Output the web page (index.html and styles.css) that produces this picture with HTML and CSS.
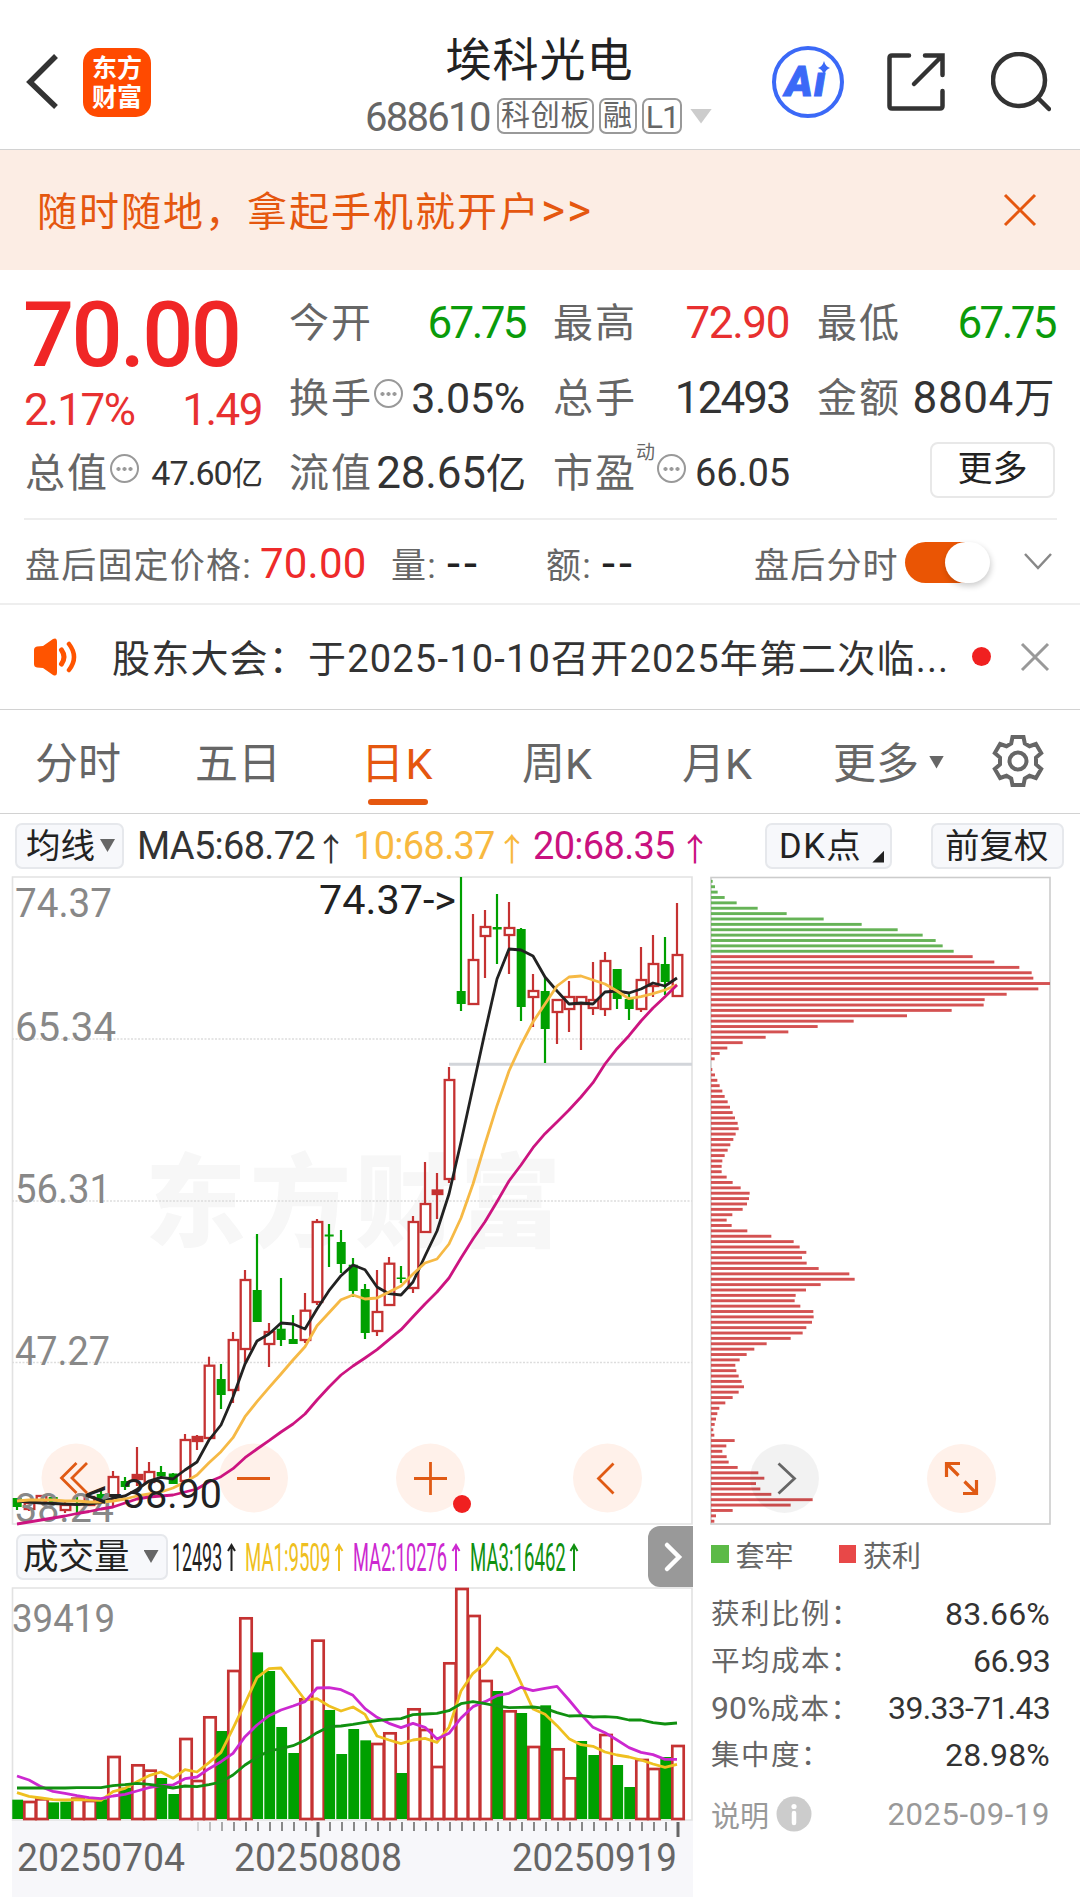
FILE: index.html
```html
<!DOCTYPE html>
<html lang="zh-CN">
<head>
<meta charset="utf-8">
<title>埃科光电 688610</title>
<link rel="stylesheet" href="styles.css">
</head>
<body>
<header class="header">
  <div class="header-left">
    <svg class="back" width="34" height="60" viewBox="0 0 34 60"><path d="M31 5 5 31l26 25"/></svg>
    <div class="logo"><span>东方</span><span>财富</span></div>
  </div>
  <div class="header-title">
    <h1>埃科光电</h1>
    <div class="code-row"><span class="code">688610</span><span class="tag">科创板</span><span class="tag">融</span><span class="tag">L1</span><i class="tri tri-code"></i></div>
  </div>
  <div class="header-right">
    <svg width="74" height="74" viewBox="0 0 74 74">
      <circle cx="37" cy="37" r="34" fill="none" stroke="#3b69f7" stroke-width="4"/>
      <text class="ai" x="14" y="51">A</text>
      <text class="ai" x="43" y="51">ı</text>
      <path d="M53 16q1.500 5.500 6 7-4.500 1.500-6 7-1.500-5.500-6-7 4.500-1.500 6-7z" fill="#3b69f7"/>
    </svg>
    <svg class="line-icon" width="60" height="60" viewBox="0 0 60 60"><path d="M23 3.500H6Q3.500 3.500 3.500 6v48q0 2.500 2.500 2.500h48q2.500 0 2.500-2.500V39M39 3.500h17.500V23M56 4 28 32"/></svg>
    <svg class="line-icon" width="60" height="60" viewBox="0 0 60 60"><circle cx="28" cy="28" r="26"/><path d="M47 46l11 11"/></svg>
  </div>
</header>

<section class="banner">
  <p>随时随地，拿起手机就开户<span>&gt;&gt;</span></p>
  <svg width="34" height="34" viewBox="0 0 34 34"><path d="M2 2l30 30M32 2 2 32"/></svg>
</section>

<section class="quote">
  <div class="price-cell">
    <div class="price">70.00</div>
    <div class="change"><span>2.17%</span><span>1.49</span></div>
  </div>
  <div class="cell"><span>今开</span><b class="green">67.75</b></div>
  <div class="cell"><span>最高</span><b class="red">72.90</b></div>
  <div class="cell"><span>最低</span><b class="green">67.75</b></div>
  <div class="cell"><span>换手</span><i class="dots"></i><b class="n42">3.05%</b></div>
  <div class="cell"><span>总手</span><b class="n45">12493</b></div>
  <div class="cell"><span>金额</span><b class="wan">8804<em>万</em></b></div>
  <div class="cell"><span>总值</span><i class="dots"></i><b class="n34">47.60<em>亿</em></b></div>
  <div class="cell"><span>流值</span><b class="n44">28.65<em>亿</em></b></div>
  <div class="cell"><span>市盈</span><sup>动</sup><i class="dots pe"></i><b class="n38">66.05</b></div>
  <div class="cell end"><button class="more">更多</button></div>
</section>

<section class="after">
  <span class="a-label">盘后固定价格:</span><b class="a-price">70.00</b>
  <span class="a-vol">量:</span><b class="dash">--</b>
  <span class="a-amt">额:</span><b class="dash">--</b>
  <span class="a-time">盘后分时</span>
  <span class="toggle"><i></i></span>
  <svg width="30" height="20" viewBox="0 0 30 20"><path d="M2 2l13 14L28 2"/></svg>
</section>

<section class="news">
  <svg width="46" height="38" viewBox="0 0 46 38"><path d="M1 12q0-3 3-3.500l6-.5L20 1q4-2 4 3v30q0 5-4 3l-10-7-6-.5q-3-.5-3-3.500z" fill="#ff5400"/><path d="M28.500 12q5 7 0 14" fill="none" stroke="#ff5400" stroke-width="5" stroke-linecap="round"/><path d="M36 6q10 13 0 26" fill="none" stroke="#ff5400" stroke-width="4.500" stroke-linecap="round"/></svg>
  <p>股东大会：于2025-10-10召开2025年第二次临...</p>
  <i class="dot"></i>
  <svg class="close" width="30" height="30" viewBox="0 0 30 30"><path d="M2 2l26 26M28 2 2 28"/></svg>
</section>

<nav class="tabs">
  <a>分时</a><a>五日</a><a class="active">日K</a><a>周K</a><a>月K</a><a class="tab-more">更多<i class="tri"></i></a>
  <svg width="54" height="54" viewBox="0 0 54 54"><path d="M21.500 3h11l1.300 6.500 4.700 2.700 6.400-2.200 5.300 9-5.200 4.600v6.800l5.200 4.600-5.300 9-6.400-2.200-4.700 2.700L32.500 51h-11l-1.300-6.500-4.700-2.700L9.100 44l-5.300-9L9 30.400v-6.800L3.800 19l5.300-9 6.400 2.200 4.700-2.700z"/><circle cx="27" cy="27" r="8.500"/></svg>
</nav>

<div class="tools">
  <button class="chip ma">均线<i class="tri"></i></button>
  <span class="m5">MA5:68.72<i>↑</i></span><span class="m10">10:68.37<i>↑</i></span><span class="m20">20:68.35<i>↑</i></span>
  <button class="chip dk">DK点<i class="corner"></i></button>
  <button class="chip adj">前复权</button>
</div>

<main class="charts">
  <div class="left">
    <svg id="kline" width="693" height="650" viewBox="0 876 693 650"></svg>
    <div class="vol-bar">
      <button class="chip vol">成交量<i class="tri"></i></button>
      <svg width="480" height="61" viewBox="168 1526 480 61" class="legend">
        <g fill="#222"><text transform="translate(172 1571) scale(.470 1)">12493</text><path d="M231.500 1571v-25M228 1551l3.500-6 3.500 6" stroke="#222"/></g>
        <g fill="#efbf20"><text transform="translate(245 1571) scale(.490 1)">MA1:9509</text><path d="M339 1571v-25M335.500 1551l3.500-6 3.500 6" stroke="#efbf20"/></g>
        <g fill="#cc28d0"><text transform="translate(353 1571) scale(.480 1)">MA2:10276</text><path d="M456 1571v-25M452.500 1551l3.500-6 3.500 6" stroke="#cc28d0"/></g>
        <g fill="#109010"><text transform="translate(470 1571) scale(.490 1)">MA3:16462</text><path d="M574 1571v-25M570.500 1551l3.500-6 3.500 6" stroke="#109010"/></g>
      </svg>
      <button class="next"><svg width="20" height="32" viewBox="0 0 20 32"><path d="M4 4l12 12L4 28"/></svg></button>
    </div>
    <svg id="volume" width="693" height="310" viewBox="0 1587 693 310"></svg>
  </div>
  <aside class="right">
    <svg id="costs" width="387" height="650" viewBox="693 876 387 650"></svg>
    <div class="keys"><i class="key-g"></i><span>套牢</span><i class="key-r"></i><span>获利</span></div>
    <dl class="stats">
      <div><dt>获利比例：</dt><dd class="pct">83.66%</dd></div>
      <div><dt>平均成本：</dt><dd>66.93</dd></div>
      <div><dt><u>90%</u>成本：</dt><dd>39.33-71.43</dd></div>
      <div><dt>集中度：</dt><dd class="pct">28.98%</dd></div>
    </dl>
    <div class="note"><span>说明</span><svg width="36" height="36" viewBox="0 0 36 36"><circle cx="18" cy="18" r="17.500" fill="#ccc"/><circle cx="18" cy="10.500" r="2.600" fill="#fff"/><path d="M18 17v10" stroke="#fff" stroke-width="4.500" stroke-linecap="round"/></svg><time>2025-09-19</time></div>
  </aside>
</main>
<script src="charts.js"></script>
</body>
</html>
```
FILE: styles.css
```css
* { box-sizing: border-box; margin: 0; padding: 0; }
body { width: 1080px; height: 1897px; overflow: hidden; background: #fff; color: #333; font-family: Roboto, "Noto Sans CJK SC", sans-serif; }
svg { display: block; flex: none; }
i, em { font-style: normal; }
u { text-decoration: none; }
b { font-weight: 400; }
button { font: inherit; color: #222; background: none; border: 0; }
.tri { display: inline-block; width: 15px; height: 13px; background: #666; clip-path: polygon(0 0, 100% 0, 50% 100%); }

.header { display: grid; grid-template-columns: 366px 347px 367px; height: 150px; border-bottom: 1px solid #d2d2d2; }
.header-left { display: flex; align-items: flex-start; padding: 48px 0 0 25px; }
.back { margin-top: 3px; fill: none; stroke: #333; stroke-width: 5.500; }
.logo { display: flex; flex-direction: column; align-items: center; justify-content: center; width: 68px; height: 69px; margin-left: 24px; border-radius: 15px; background: #ff4a00; color: #fff; font-weight: 700; font-size: 25px; line-height: 29px; }
.header-title { padding-top: 32px; }
.header-title h1 { font-size: 46px; line-height: 56px; font-weight: 400; color: #222; text-align: center; letter-spacing: 1px; }
.code-row { display: flex; align-items: center; height: 36px; margin-top: 10px; color: #666; white-space: nowrap; }
.code { width: 132px; margin-left: -1px; font-size: 40px; letter-spacing: -1.700px; line-height: 36px; padding-top: 3px; flex: none; }
.tag { height: 36px; padding: 0 2px; margin-right: 5px; border: 2px solid #999; border-radius: 7px; font-size: 29px; line-height: 32px; letter-spacing: .700px; flex: none; }
.tag:nth-of-type(4) { font-size: 32px; padding: 0 1px 0 2px; letter-spacing: -1px; line-height: 34px; }
.tri-code { width: 22px; height: 15px; margin-left: 3px; background: #ccc; flex: none; }
.header-right { display: flex; align-items: flex-start; padding: 45px 0 0 58px; }
.header-right svg:nth-child(2) { margin: 7px 0 0 41px; }
.header-right svg:nth-child(3) { margin: 7px 0 0 45px; }
.ai { font: italic 900 42px Roboto, sans-serif; fill: #3b69f7; stroke: #3b69f7; stroke-width: 1; }
.line-icon { fill: none; stroke: #333; stroke-width: 4.500; stroke-linecap: round; }

.banner { display: flex; align-items: center; justify-content: space-between; height: 120px; padding: 0 43px 0 37px; background: #fcede4; color: #e5570f; }
.banner p { font-size: 40px; line-height: 60px; letter-spacing: 2px; padding-top: 5px; }
.banner span { font-size: 46px; line-height: 40px; }
.banner svg { fill: none; stroke: #e5570f; stroke-width: 3; }

.quote { display: grid; grid-template-columns: 236px 236px 236px 238px; column-gap: 28px; grid-template-rows: 75px 75px 75px; margin: 0 23px 0 24px; height: 250px; padding: 16px 0 0 1px; border-bottom: 2px solid #eee; }
.price-cell { grid-row: 1 / 3; color: #f02626; }
.price { font-size: 90px; font-weight: 500; line-height: 100px; letter-spacing: -2.700px; margin-left: -2px; }
.change { display: flex; justify-content: space-between; font-size: 44px; line-height: 48px; letter-spacing: -1.500px; margin: 0 -1px; color: #e83030; }
.cell { display: flex; align-items: center; line-height: 75px; white-space: nowrap; }
.cell > span { font-size: 40px; letter-spacing: 2px; color: #666; }
.cell b { margin-left: auto; font-size: 44px; }
.cell em { font-size: .92em; }
.cell .green { color: #0a9b0a; letter-spacing: -2.600px; }
.cell .red { color: #e83030; letter-spacing: -1.400px; }
.cell .n42 { font-size: 43px; letter-spacing: -.300px; }
.cell .n45 { font-size: 44px; letter-spacing: -1.900px; }
.cell .wan { font-size: 44px; letter-spacing: .600px; }
.cell .n34 { font-size: 34px; letter-spacing: -1px; margin-right: -1px; }
.cell .n44 { font-size: 44px; letter-spacing: -.200px; margin-right: -1px; }
.cell .n38 { font-size: 38px; letter-spacing: -.100px; margin-right: -1px; }
.cell sup { align-self: flex-start; margin-left: -1px; font-size: 19px; line-height: 34px; color: #666; width: 20px; }
.dots { width: 29px; height: 29px; margin: -10px 0 0 1px; border: 2.500px solid #999; border-radius: 50%; background: radial-gradient(circle, #999 1.700px, transparent 2.200px) 50% / 6px 6px repeat-x; background-clip: content-box; padding: 0 3px; }
.more { width: 125px; height: 56px; border: 2px solid #e8e8e8; border-radius: 8px; font-size: 35px; line-height: 50px; margin-top: -8px; }
.end { justify-content: flex-end; }

.after { display: flex; align-items: center; height: 85px; padding: 1px 0 0 25px; border-bottom: 2px solid #eee; color: #666; font-size: 35px; white-space: nowrap; }
.after > span { letter-spacing: 1.200px; }
.a-label { width: 235px; }
.a-price { width: 131px; font-size: 42px; letter-spacing: .200px; padding-top: 2px; color: #ee2a2a; }
.a-vol { width: 56px; }
.dash { width: 99px; color: #222; font-size: 47px; letter-spacing: 4px; }
.a-amt { width: 56px; }
.a-time { width: 151px; margin-left: 53px; }
.after .toggle { width: 85px; height: 41px; border-radius: 21px; background: linear-gradient(90deg, #ea5504 60px, transparent 60px); display: flex; justify-content: flex-end; }
.toggle i { width: 45px; height: 41px; border-radius: 21px; background: #fff; box-shadow: 1px 3px 6px rgba(0,0,0,.2); }
.after svg { margin-left: 33px; fill: none; stroke: #888; stroke-width: 2.500; }

.news { display: flex; align-items: center; height: 105px; padding: 0 30px 0 33px; border-bottom: 1px solid #d2d2d2; }
.news svg { margin-bottom: 1px; }
.news p { width: 838px; margin-left: 33px; padding-bottom: 4px; font-size: 38px; letter-spacing: 1.200px; white-space: nowrap; }
.dot { width: 19px; height: 19px; margin: 0 0 1px 22px; border-radius: 50%; background: #f02020; }
.close { margin-left: 29px; fill: none; stroke: #999; stroke-width: 3; }

.tabs { display: flex; align-items: center; height: 104px; padding-left: 35px; border-bottom: 1px solid #d2d2d2; font-size: 43px; color: #666; white-space: nowrap; }
.tabs a { width: 161px; height: 102px; line-height: 107px; }
.tabs a:nth-child(2) { width: 166px; margin-left: -1px; }
.tabs a:nth-child(3) { width: 161px; }
.tabs a:nth-child(4) { width: 160px; }
.tabs a:nth-child(5) { width: 151px; }
.tabs .tab-more { width: 158px; }
.tab-more .tri { margin: 0 0 10px 10px; }
.tabs .active { color: #e5570f; letter-spacing: 1.500px; }
.active::after { content: ""; display: block; width: 60px; height: 6px; margin: -19px 0 0 7px; border-radius: 3px; background: #e5570f; }
.tabs svg { fill: none; stroke: #666; stroke-width: 4; margin-top: -1px; }

.tools { display: flex; align-items: center; height: 62px; padding: 1px 0 0 15px; font-size: 38px; white-space: nowrap; }
.chip { display: flex; align-items: center; height: 46px; padding: 0 9px; border: 2px solid #e6e8ec; border-radius: 7px; background: #f7f8fb; font-size: 34.500px; line-height: 42px; white-space: nowrap; flex: none; }
.tools .ma { width: 109px; }
.ma .tri { margin-left: 5px; flex: none; }
.tools span { display: flex; justify-content: space-between; letter-spacing: -.700px; padding-top: 3px; }
.tools span i { width: 14px; letter-spacing: 0; display: flex; justify-content: center; font-family: "Noto Sans CJK SC", sans-serif; font-size: 32px; }
.m5 { width: 201px; margin-left: 13px; }
.m10 { width: 166px; margin-left: 15px; color: #f8b93f; }
.m20 { width: 169px; margin-left: 14px; color: #c9117f; }
.tools .dk { width: 127px; margin: 0 39px 0 63px; padding-left: 12px; letter-spacing: 1.500px; }
.corner { width: 12px; height: 12px; margin: 22px 0 0 10px; background: #222; clip-path: polygon(100% 0, 100% 100%, 0 100%); flex: none; }
.adj { width: 133px; padding-left: 12px !important; }

.charts { display: flex; height: 1021px; }
.left { width: 693px; }
.right { width: 387px; }
svg text { font-family: Roboto, "Noto Sans CJK SC", sans-serif; }
.vol-bar { display: flex; align-items: center; height: 61px; padding-left: 16px; }
.vol { width: 152px; padding: 0 5px; font-size: 35.500px; }
.vol .tri { margin-left: 14px; flex: none; }
.legend text { font-size: 38px; }
.legend path { fill: none; stroke-width: 2; }
.next { display: flex; align-items: center; justify-content: center; width: 45px; height: 61px; border-radius: 12px 0 0 12px; background: #999; padding-left: 5px; }
.next path { fill: none; stroke: #fff; stroke-width: 4.500; stroke-linecap: round; }

.keys { display: flex; align-items: center; height: 58px; padding: 0 0 2px 18px; font-size: 29px; color: #666; }
.keys i { width: 17.500px; height: 17.500px; }
.keys span { margin: -1px 0 0 7px; }
.key-g { background: #5cba47; }
.keys .key-r { background: #e84848; margin-left: 45px; }
.stats { padding: 7px 30px 0 18px; }
.stats div { display: flex; justify-content: space-between; height: 47px; line-height: 47px; }
.stats dt { font-size: 28.500px; letter-spacing: 1.500px; color: #666; }
.stats u { font-size: 32px; letter-spacing: 0; }
.stats dd { font-size: 32px; letter-spacing: -.700px; }
.stats .pct { letter-spacing: .200px; }
.note { display: flex; align-items: center; height: 72px; padding: 0 30px 2px 18px; font-size: 29px; color: #999; }
.note svg { margin-left: 7px; }
.note time { margin-left: auto; font-size: 31px; letter-spacing: .600px; }
```
FILE: charts.js
```js
const NS = 'http://www.w3.org/2000/svg';
const add = (p, n, a, t) => {
  const e = document.createElementNS(NS, n);
  for (const k in a) e.setAttribute(k, a[k]);
  if (t) e.textContent = t;
  p.appendChild(e);
  return e;
};
const X = i => 17 + 12 * i;
const RED = '#c53232', GREEN = '#00a000';
const curve = (p, ys, color, map = y => y) =>
  add(p, 'polyline', { points: ys.map((y, i) => X(i) + ',' + map(y)).join(' '), fill: 'none', stroke: color, 'stroke-width': 2.8, 'stroke-linejoin': 'round' });
const label = (p, t, x, y, w, size, fill) =>
  add(p, 'text', { x, y, textLength: w, lengthAdjust: 'spacingAndGlyphs', 'font-size': size, fill }, t);

/* candles: colour, high, body top, body bottom, low */
const candles = `g 1498 1498 1507 1510|r 1501 1503 1509 1511|r 1495 1496 1502 1502|g 1497 1497 1502 1502|r 1502 1505 1510 1513|g 1497 1503 1505 1513|r 1497 1497 1505 1505|g 1491 1494 1501 1501|r 1471 1477 1496 1508|g 1477 1481 1487 1490|r 1447 1475 1479 1486|r 1462 1472 1482 1482|g 1466 1472 1476.5 1477|g 1473 1473.5 1484 1484|r 1434 1440 1481 1481|r 1435 1437 1441 1450|r 1356.700 1365.700 1438 1438|g 1364 1379 1395 1409|r 1332 1340 1390 1403|r 1270 1280 1349 1362|g 1234 1290 1322 1322|r 1323 1332 1344 1367|g 1278 1328.700 1340 1346|g 1315 1339 1344 1344|r 1293 1310.700 1340 1343|r 1219 1222 1302 1305|g 1224 1234.500 1236.500 1267|g 1230 1242 1264 1273|g 1258 1264.700 1291 1297|g 1284 1289 1333 1339|r 1270 1312 1331 1336|r 1257 1263.700 1305 1305|g 1266 1277.500 1279 1283|r 1216 1222 1288 1293|r 1162 1204 1232 1232|r 1173 1190.500 1194 1219|r 1067 1080 1179 1183|g 877 991 1004 1011|r 914 960 1004 1004|r 910 927 936 978|g 894 927 929.500 964|r 902 928 935 974|g 928 929 1007 1021|r 974 991 997 1027|g 977 991 1029 1063|r 1000 1000 1012 1044|r 981 997 1009 1032|r 997 997 1004 1050|r 962 1000 1008 1015|r 952 961 1009 1016|g 969 969 999 1009|g 993 999 1009 1020|r 947 980 1009 1012|r 935 964 986 997|g 937 964 982 995|r 903 955 996 996`
  .split('|').map(s => s.split(' '));
const ma5 = [1501,1502,1503,1503.5,1504,1504.7,1504,1502.6,1498,1496,1489.5,1481,1477.4,1479,1470,1462,1440,1425,1397,1364,1341,1334,1323,1324,1329,1309,1290.7,1275.7,1265,1269.7,1287,1293.7,1295,1282,1256,1231,1194,1142,1087,1032,979,949,950,956,977,991,1004,1003,1004,992,991,993,989,983,986,978];
const ma10 = [1501,1500,1500,1500,1501,1501,1502,1502,1501,1499,1496,1494,1492,1488,1482,1475,1462.7,1451.7,1437.7,1416.7,1401.7,1387.7,1374,1360,1346.7,1325.7,1312.7,1299.7,1295,1299,1298,1292,1286,1274,1263,1259,1244,1218,1184,1144,1105.7,1071,1045,1022,1004,986,977,976,980,984,991,998.7,996.7,993.7,990,984.7];
const ma20 = [1524,1522,1520,1518,1516,1513.5,1511.5,1509,1507,1503,1499,1497,1496,1495,1492,1489,1481.7,1476.7,1468.7,1457.7,1449,1440.7,1432,1424,1414,1400,1387,1375,1366,1358,1349.7,1339.7,1329.7,1316.7,1304,1292,1278,1258,1239,1221.7,1201.7,1181,1165,1147.7,1133.7,1122,1110,1097,1082.7,1064,1048.7,1035.7,1021,1008,996.7,985];

const k = document.getElementById('kline');
add(k, 'text', { x: 145, y: 1239, 'font-size': 101, 'font-weight': 900, fill: '#f7f7f7', textLength: 416 }, '东方财富');
add(k, 'path', { d: 'M12.500 1524V877H692V1524Z', fill: 'none', stroke: '#e2e2e2', 'stroke-width': 1.6 });
[1039, 1201, 1362.5].forEach(y => add(k, 'path', { d: `M12 ${y}H692`, stroke: '#ddd', 'stroke-width': 1.3, 'stroke-dasharray': '2 1.500' }));
add(k, 'path', { d: 'M449 1064.300H692', stroke: '#d2d5da', 'stroke-width': 3 });
[[76, 1478], [253.5, 1478], [430.5, 1478], [607.5, 1478]].forEach(c => add(k, 'circle', { cx: c[0], cy: c[1], r: 34.5, fill: '#fff1ea' }));
candles.forEach(([c, h, t, b, l], i) => {
  const x = X(i), col = c === 'r' ? RED : GREEN;
  t = +t; b = +b;
  if (c === 'g') {
    add(k, 'path', { d: `M${x} ${h}V${l}`, stroke: col, 'stroke-width': 2.2 });
    add(k, 'rect', { x: x - 4.3, y: t, width: 9, height: b - t, fill: col });
  } else {
    add(k, 'path', { d: `M${x} ${h}V${t}M${x} ${b}V${l}`, stroke: col, 'stroke-width': 2.2 });
    add(k, 'rect', { x: x - 4.3, y: t, width: 9.6, height: Math.max(b - t, 1), fill: b - t < 5 ? col : '#fff', stroke: col, 'stroke-width': 2.3 });
  }
});
label(k, '74.37', 15, 916.5, 97, 41, '#888');
label(k, '65.34', 15, 1040.5, 101, 41, '#888');
label(k, '56.31', 15, 1202.5, 96, 41, '#888');
label(k, '47.27', 15, 1364.5, 95, 41, '#888');
label(k, '38.24', 15, 1522, 99, 40, '#888');
curve(k, ma5, '#222');
curve(k, ma10, '#f6b945');
curve(k, ma20, '#cc1480');
label(k, '74.37->', 319, 914, 137, 41, '#222');
label(k, '<-', 84, 1508, 38, 41, '#222');
label(k, '38.90', 123, 1508, 99, 41, '#222');
const icon = (d, c = '#e05a14') => ({ d, fill: 'none', stroke: c, 'stroke-width': 2.8 });
add(k, 'path', icon('M76.500 1463l-15 15 15 15M87 1463l-15 15 15 15M237 1478.500h33M414 1478.500h33M430.500 1462v33M613.500 1463.500l-15 15 15 15'));
add(k, 'circle', { cx: 462, cy: 1504, r: 9, fill: '#f02020' });

/* holding-cost distribution: bar ends, three units per pixel, origin 33 */
const ends = [38,45,53,74,110,173,260,371,485,593,668,707,728,761,818,883,958,995,1000,1050,1015,920,854,851,755,621,461,353,265,197,128,82,59,44,33,37,45,52,59,67,74,83,90,98,105,113,116,107,100,91,83,74,67,65,65,80,98,122,149,147,141,128,97,80,95,142,214,281,299,319,306,320,356,448,464,362,318,287,284,301,340,341,336,319,308,272,200,163,140,119,106,109,116,125,132,116,98,76,58,52,48,44,40,43,104,79,67,80,86,113,175,193,168,181,214,338,272,98,48,43];
const c = document.getElementById('costs');
add(c, 'rect', { x: 711, y: 877.5, width: 339, height: 646.5, fill: 'none', stroke: '#ccc', 'stroke-width': 1.6 });
ends.forEach((e, i) => add(c, 'rect', { x: 711, y: 879.9 + 5.377 * i, width: (e - 33) / 3, height: 2.9, fill: i < 14 ? '#66b357' : '#d45252' }));
add(c, 'circle', { cx: 784.5, cy: 1478.500, r: 34.5, fill: 'rgba(0,0,0,.05)' });
add(c, 'circle', { cx: 961.5, cy: 1478.500, r: 34.5, fill: '#fff1ea' });
add(c, 'path', icon('M778.500 1463.500l16 15-16 15', '#666'));
add(c, 'path', Object.assign(icon('M946.500 1477v-13.500h13.500M947 1464l11.500 11.500M963 1493.500h13.500V1480M976 1493l-11.500-11.500'), { 'stroke-width': 3.2 }));

/* volume panel, three units per pixel from 1520 */
const Y = y => 1520 + y / 3;
const vol = 'g839 r843 r835 g847 g845 r833 r840 g838 r708 g803 r733 r749 g774 g822 r654 r780 r589 g633 r450 r292 g397 g453 g621 g699 r535 r359 g570 g702 g627 g661 r669 r637 g759 r565 r627 r738 r427 r204 r285 r480 g513 r571 g579 r678 g556 r685 r772 g663 g705 r642 g735 g801 r717 r744 g711 r675'.split(' ');
const v1 = [818,829,834,839,840,839,840,841,815,805,785,767,756,775,749,756,728,697,625,550,473,446,444,492,540,536,558,573,561,583,648,660,671,660,655,667,622,513,460,430,384,413,489,567,583,617,656,674,679,696,705,711,720,732,742,733];
const v2 = [768,780,800,814,820,827,833,836,828,823,813,803,797,795,776,771,746,725,700,650,615,587,570,558,545,504,503,509,526,566,592,610,623,610,622,657,640,594,560,545,527,520,502,512,505,499,540,583,622,638,660,683,697,704,718,718];
const v3 = [804,804,804,804,804,803,803,803,797,794,790,793,798,804,798,800,794,786,765,735,712,693,686,677,661,638,620,618,613,607,602,598,596,584,582,580,572,551,545,551,558,563,562,561,565,578,588,587,591,590,592,600,600,608,612,609];
const v = document.getElementById('volume');
add(v, 'rect', { x: 12, y: 1820.500, width: 681, height: 77, fill: '#f7f7fa' });
add(v, 'path', { d: 'M12.500 1820V1588H692V1820Z', fill: 'none', stroke: '#e2e2e2', 'stroke-width': 1.6 });
label(v, '39419', 12, 1632, 103, 38, '#888');
vol.forEach((s, i) => {
  const x = X(i), y = Y(+s.slice(1));
  if (s[0] === 'g') add(v, 'rect', { x: x - 4.7, y, width: 10.8, height: 1819 - y, fill: GREEN });
  else add(v, 'rect', { x: x - 4.7, y: y + 1, width: 11.4, height: 1818 - y, fill: '#fff', stroke: RED, 'stroke-width': 2.7 });
});
curve(v, v1, '#efc020', Y);
curve(v, v2, '#cc28d0', Y);
curve(v, v3, '#109010', Y);
for (let i = 0; i < 40; i++) {
  const big = i === 10;
  add(v, 'path', { d: `M${198 + 12 * i} 1822v${big ? 15 : 9}`, stroke: big ? '#666' : '#888', 'stroke-width': big ? 3 : 2, opacity: Math.min(1, .3 + i * .2) });
}
add(v, 'path', { d: 'M678 1822v15', stroke: '#666', 'stroke-width': 3 });
label(v, '20250704', 17, 1871, 168, 38, '#666');
label(v, '20250808', 234, 1871, 168, 38, '#666');
label(v, '20250919', 512, 1871, 165, 38, '#666');
```
